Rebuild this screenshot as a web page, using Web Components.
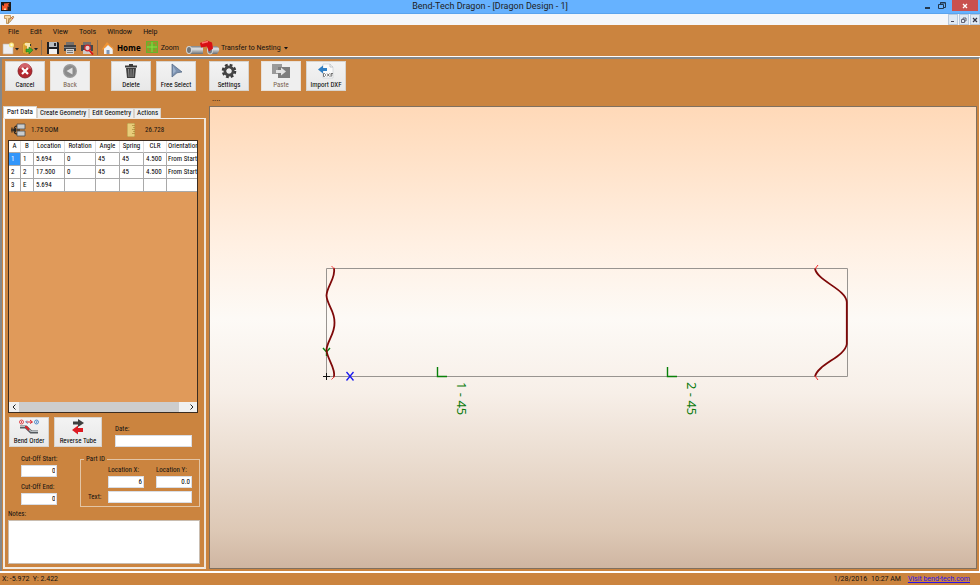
<!DOCTYPE html>
<html lang="en">
<head>
<meta charset="utf-8">
<title>Bend-Tech Dragon - [Dragon Design - 1]</title>
<style>
  html, body { height: 100%; }
  body {
    margin: 0;
    --wood: #cb843f;
    --ui: Roboto, "Open Sans", sans-serif;
    --form: "Roboto Condensed", "Liberation Sans Narrow", sans-serif;
    font: 7px/10px "Roboto Condensed", "Liberation Sans Narrow", sans-serif;
    color: #111;
  }
</style>
</head>
<body>
<bend-app></bend-app>

<script>
const define = (name, html, init) => customElements.define(name, class extends HTMLElement {
  constructor() {
    super();
    const t = document.createElement('template');
    t.innerHTML = html;
    const root = this.attachShadow({ mode: 'open' });
    root.append(t.content.cloneNode(true));
    if (init) init(this, root);
  }
});

define('title-bar', `
<style>
  :host { display: flex; align-items: flex-start; height: 13px; background: #66b2ff; border-bottom: 1px solid #5aa4ee; font: 9px/13px Roboto, "Open Sans", sans-serif; color: #222; }
  .logo { width: 12px; height: 12px; flex: none; }
  h1 { flex: 1; margin: 0; font: inherit; text-align: center; }
  .lead { width: 50px; }
  button { border: 0; padding: 0; margin: 0; background: none; width: 16px; height: 11px; display: grid; place-items: center; }
  button.close { width: 26px; background: #c9504f; margin-right: 2px; margin-left: 2px; }
</style>
<svg class="logo" viewBox="0 0 12 12"><rect x="1" y="2" width="10" height="9" fill="#1c1a1a"/><path d="M2 10V5L4 6V3.500L9.500 3L8 5L9.500 6.500L7.500 6.500V10Z" fill="#f0562a"/><path d="M4 8.500h2V10H4z" fill="#ffd0a0"/></svg>
<span class="lead"></span>
<h1><slot></slot></h1>
<button aria-label="Minimize"><svg width="8" height="8"><path d="M3 5h5v2H3z" fill="#22384e"/></svg></button>
<button aria-label="Restore"><svg width="8" height="8" fill="none" stroke="#22384e"><path d="M2.500 2.500V.5H7.500V5.500H5.500M2 1h5"/><path d="M.5 2.500h5v4h-5z"/></svg></button>
<button class="close" aria-label="Close"><svg width="6" height="6"><path d="M1 1L5 5M5 1L1 5" stroke="#fff" stroke-width="1.300"/></svg></button>
`);

define('mdi-bar', `
<style>
  :host { display: flex; justify-content: space-between; height: 11px; background: #f5f7fa; }
  svg { display: block; }
  div { display: flex; gap: 1px; }
  button { box-sizing: border-box; width: 10px; height: 11px; padding: 0; border: 1px solid #b9cade; background: #dfe9f4; display: grid; place-items: center; }
</style>
<svg width="16" height="11"><path d="M4.500 1.500h6v3h-2v5h-2v-5h-2z" fill="#f6d9a8" stroke="#b98545" stroke-width=".8"/><path d="M8 9l1-3 4-4 1 1-4 5z" fill="#eec27e" stroke="#8f6a3a" stroke-width=".6"/><path d="M11.500 3.500l1.500 1.500" stroke="#d0503a"/></svg>
<div>
<button aria-label="Minimize document"><svg width="6" height="6"><path d="M1 4h3v1H1z" fill="#445"/></svg></button>
<button aria-label="Restore document"><svg width="6" height="6" fill="none" stroke="#445" stroke-width=".8"><path d="M2 2V1h3v3H4M.5 2.500h3v3h-3z"/></svg></button>
<button aria-label="Close document"><svg width="6" height="6"><path d="M1 1L5 5M5 1L1 5" stroke="#334" stroke-width="1.200"/></svg></button>
</div>
`);

define('menu-bar', `
<style>
  :host { display: block; background: var(--wood); font: 7px/14px var(--ui); padding: 0 8px; }
  nav { display: flex; gap: 11px; }
  button { border: 0; background: none; padding: 0; font: inherit; color: inherit; }
</style>
<nav><button>File</button><button>Edit</button><button>View</button><button>Tools</button><button>Window</button><button>Help</button></nav>
`);

define('tool-strip', `
<style>
  :host { display: flex; align-items: center; height: 17px; padding-left: 2px; background: var(--wood); font: 7px/16px var(--ui); border-bottom: 1px solid #fff; }
  button { border: 0; background: none; padding: 0; margin: 0; font: inherit; color: inherit; display: flex; align-items: center; height: 16px; }
  svg { display: block; }
  i { width: 1px; height: 15px; background: #8d6f50; margin: 0 4px 0 2px; }
  .save { margin-right: 3px; }
  .home { font: bold 8px/16px "Open Sans", sans-serif; gap: 3px; margin-right: 5px; color: #000; }
  .zoom { gap: 3px; margin-right: 6px; }
  .nest { gap: 1px; }
</style>
<button aria-label="New"><svg width="18" height="14"><path d="M1 3h7l3 2v8H1z" fill="#eeeef0" stroke="#b8b2aa" stroke-width=".6"/><circle cx="9.500" cy="4" r="2.500" fill="#fbe77a"/><circle cx="9.500" cy="4" r="1.200" fill="#fffbe0"/><path d="M13 7h4l-2 2.500z" fill="#222"/></svg></button>
<button aria-label="Open"><svg width="19" height="14"><path d="M3 3l3-2 5 1v9l-4 2-4-1z" fill="#f0c24e" stroke="#b27e1c" stroke-width=".6"/><path d="M5 2h5v8H5z" fill="#f7e3ae"/><path d="M4 4l3 1v8l-3-1z" fill="#d99f2c"/><path d="M6 8h3V6l4 3-4 4v-2H6z" fill="#3cab2c" stroke="#1c6f15" stroke-width=".5"/><path d="M10 3h1v2h-1z" fill="#333"/><path d="M14 7h4l-2 2.500z" fill="#222"/></svg></button>
<i></i>
<button class="save" aria-label="Save"><svg width="14" height="14"><path d="M1 1h11l1 1v11H1z" fill="#1f1f22"/><path d="M3 1h8v5H3z" fill="#b9bdc1"/><path d="M8 2h2v3H8z" fill="#2b2b2f"/><path d="M3 8h8v5H3z" fill="#f1f1f1"/></svg></button>
<button class="save" aria-label="Print"><svg width="14" height="14"><path d="M3 1h8v4H3z" fill="#77706b"/><path d="M1 4h12v6H1z" fill="#3f4043"/><path d="M1 6h12v1H1z" fill="#808386"/><path d="M3 8h8v5H3z" fill="#d6d4d2"/><path d="M4 9.500h6M4 11.500h6" stroke="#77797b"/></svg></button>
<button aria-label="Print preview"><svg width="15" height="14"><path d="M3 1h8v4H3z" fill="#77706b"/><path d="M1 4h12v6H1z" fill="#45464a"/><path d="M3 9h8v4H3z" fill="#d0cdca"/><circle cx="7.500" cy="7" r="2.800" fill="#e6cfd0" stroke="#d02427" stroke-width="1.300"/><path d="M9.500 9.500l3.500 4" stroke="#d9151b" stroke-width="1.800"/></svg></button>
<i></i>
<button class="home"><svg width="12" height="14"><path d="M2 7v6h8.500V6.500z" fill="#e9edf2"/><path d="M0 8L5 1l7 7-1 1-5-5-5 5z" fill="#f19535"/><path d="M2 8l4-4 4.500 4v5H2z" fill="#f0f2f5"/><path d="M4.500 9h3v4h-3z" fill="#7e96b6"/></svg>Home</button>
<button class="zoom"><svg width="12" height="13" fill="none"><path d="M0 0h12v12H0z" fill="#68b32b"/><path d="M2 5V2h3M7 2h3v3M2 7v3h3M7 10h3V7" stroke="#b1862f" stroke-width="1.300"/><path d="M6 1v10M1 6h10" stroke="#8ede45"/></svg>Zoom</button>
<button class="nest"><svg width="35" height="16"><defs><linearGradient id="s" x2="0" y2="1"><stop stop-color="#777c80"/><stop offset=".35" stop-color="#e2e5e7"/><stop offset="1" stop-color="#6b6f73"/></linearGradient></defs><path d="M4 6h14v8H4z" fill="url(#s)"/><ellipse cx="4" cy="10" rx="3" ry="4" fill="#d4d7d9"/><ellipse cx="4" cy="10" rx="2" ry="3" fill="#71767a"/><path d="M24 7l7-1q4 1 3 5l-2 3h-6z" fill="url(#s)"/><ellipse cx="25" cy="10.500" rx="3" ry="4" fill="#cfd2d4"/><ellipse cx="25" cy="10.500" rx="2" ry="3" fill="#74797d"/><path d="M15 3l7-2.500 5 2 1 6-4 3-2-5-6 1z" fill="#d80f14"/><path d="M17 3l6-1.500" stroke="#ff7a70" stroke-width="1.300"/></svg>Transfer to Nesting <svg width="8" height="6"><path d="M2 2h4L4 4.500z" fill="#111"/></svg></button>
`);

const icons = {
  cancel: '<circle cx="8" cy="8" r="7" fill="#b4272e" stroke="#7c1b20" stroke-width=".8"/><path d="M2 6a6 6 0 0 1 12 0q-6-3-12 0z" fill="#d0636a"/><path d="M5 5l6 6M11 5l-6 6" stroke="#fff" stroke-width="2.200"/>',
  back: '<circle cx="8" cy="8" r="7" fill="#9b9b9b"/><circle cx="8" cy="8" r="5.600" fill="#8b8b8b"/><path d="M10.500 4.500v7L4.500 8z" fill="#e2e2e2"/>',
  trash: '<path d="M2 2.500h12v2H2zM6 1h4v2H6z" fill="#3b3b3b"/><path d="M3 5h10l-1 10H4z" fill="#3f3f3f"/><path d="M5.500 6l.5 8M8 6v8M10.500 6l-.5 8" stroke="#999" stroke-width=".9"/>',
  pointer: '<path d="M4 1l10 8-5 .8L4 14z" fill="#7c92b0" stroke="#4e637f" stroke-width=".7"/><path d="M5 3v8l3-3z" fill="#9db1cb"/>',
  gear: '<circle cx="8" cy="8" r="6" fill="none" stroke="#3b3b3b" stroke-width="2.600" stroke-dasharray="2.700 2.010"/><circle cx="8" cy="8" r="4" fill="none" stroke="#454545" stroke-width="3"/><circle cx="8" cy="8" r="2.500" fill="#eee"/>',
  paste: '<path d="M0 1h10v10H0z" fill="#9a9a9a"/><path d="M6 4h12v11H6z" fill="#7d7d7d"/><path d="M4 7h5V4.500L14 8.500 9 12.500V10H4z" fill="#e3e3e3"/>',
  dxf: '<path d="M5 1h7l3 3v11H5z" fill="#fafafa" stroke="#ccd0d4" stroke-width=".7"/><path d="M12 1v3h3" fill="none" stroke="#a9afb5" stroke-width=".7"/><path d="M9 5H5V2.500L0 6.500l5 4V8h4z" fill="#2f7fc4"/><path d="M5.500 10.500v3h1l1-1v-1l-1-1zM9 10.500l2.500 3M11.500 10.500L9 13.500M13 14v-3.500h2M13 12h1.500" fill="none" stroke="#555" stroke-width=".8"/>',
  order: '<g fill="none"><circle cx="2.500" cy="3" r="2" stroke="#d8232a" stroke-width=".8"/><path d="M2.500 2v2" stroke="#d8232a" stroke-width=".8"/><path d="M7 3h6M11 1l2.500 2L11 4.500" stroke="#d8232a"/><path d="M8 1.500L6.500 3 9 4.500" stroke="#5a7fbd" stroke-width=".8"/><circle cx="17.500" cy="3" r="2" stroke="#3277c2" stroke-width=".8"/><path d="M17 2.200h1v.8l-1 .8h1" stroke="#3277c2" stroke-width=".6"/><path d="M1 8h6l5 5h7" stroke="#555b60" stroke-width="3.200"/><path d="M1 7.500h6l5 5h7" stroke="#b9bfc4" stroke-width="1.200"/><path d="M6 8h1.500L10 11" stroke="#d6262b" stroke-width="2"/></g>',
  reverse: '<path d="M3 2.500h5V0l6 4-6 4V5.500H3z" fill="#3e3e3e"/><path d="M13 9H8V6.500L2 11l6 4.500V13h5z" fill="#dd1a22"/>'
};

define('icon-button', `
<style>
  :host { display: block; width: 40px; }
  :host([wide]) { width: 48px; }
  button { width: 100%; height: 30px; padding: 1px 0 0; border: 1px solid #d8d4ce; background: linear-gradient(#f3f3f3, #e8e8e8); display: flex; flex-direction: column; align-items: center; justify-content: space-between; font: inherit; color: #000; box-sizing: border-box; white-space: nowrap; }
  :host([off]) button { background: #efefef; color: #7a6450; border-color: #e8e0d8; }
  svg { display: block; }
</style>
<button><svg height="16"></svg><span><slot></slot></span></button>
`, (host, root) => {
  const svg = root.querySelector('svg'), name = host.getAttribute('icon');
  svg.innerHTML = icons[name];
  svg.setAttribute('width', { order: 20, paste: 18 }[name] || 16);
  if (host.hasAttribute('off')) root.querySelector('button').disabled = true;
});

define('action-bar', `
<style>
  :host { display: flex; gap: 5px; padding: 2px 0 0 3px; height: 30px; }
  .g { margin-left: 16px; }
  .h { margin-left: 8px; }
  .j { margin-left: 7px; }
</style>
<icon-button icon="cancel">Cancel</icon-button>
<icon-button icon="back" off>Back</icon-button>
<icon-button icon="trash" class="g">Delete</icon-button>
<icon-button icon="pointer">Free Select</icon-button>
<icon-button icon="gear" class="h">Settings</icon-button>
<icon-button icon="paste" class="j" off>Paste</icon-button>
<icon-button icon="dxf">Import DXF</icon-button>
`);

define('tab-row', `
<style>
  :host { display: flex; align-items: flex-end; height: 12px; }
  button { height: 10px; padding: 0 2px; border: 1px solid #d9d2ca; border-bottom: 0; background: #efefef; font: 7px/9px var(--form); color: #000; white-space: nowrap; }
  button[aria-selected=true] { background: #fff; height: 12px; line-height: 11px; padding: 0 3px; }
</style>
<button role="tab" aria-selected="true">Part Data</button><button role="tab">Create Geometry</button><button role="tab">Edit Geometry</button><button role="tab">Actions</button>
`);

define('bend-table', `
<style>
  :host { display: flex; flex-direction: column; border: 1px solid #3b2c20; background: #e09a5a; overflow: hidden; flex: 1; }
  .view { flex: 1; overflow: hidden; min-height: 0; }
  table { border-collapse: separate; border-spacing: 0; table-layout: fixed; width: 203px; }
  th, td { box-sizing: border-box; height: 13px; padding: 0 2px; line-height: 12px; font-weight: 400; text-align: left; background: #fff; border-right: 1px solid #a9a9a9; border-bottom: 1px solid #a9a9a9; white-space: nowrap; color: #000; }
  th { height: 12px; line-height: 11px; text-align: center; padding: 0; border-right-color: #dedede; }
  tr > :last-child { text-align: left; padding: 0 0 0 1px; }
  td.sel { background: #3296fa; color: #fff; }
  .bar { display: flex; height: 10px; background: #f0f0f0; }
  .bar button { width: 10px; padding: 0; border: 0; background: none; display: grid; place-items: center; }
  .track { flex: 1; padding-right: 8px; }
  .thumb { height: 100%; background: #cdcdcd; }
</style>
<div class="view"><table>
<colgroup><col style="width:12px"><col style="width:13px"><col style="width:31px"><col style="width:31px"><col style="width:24px"><col style="width:24px"><col style="width:23px"><col style="width:45px"></colgroup>
<thead><tr><th>A<th>B<th>Location<th>Rotation<th>Angle<th>Spring<th>CLR<th>Orientation</tr></thead>
<tbody>
<tr><td class="sel">1<td>1<td>5.694<td>0<td>45<td>45<td>4.500<td>From Start</tr>
<tr><td>2<td>2<td>17.500<td>0<td>45<td>45<td>4.500<td>From Start</tr>
<tr><td>3<td>E<td>5.694<td><td><td><td><td></tr>
</tbody></table></div>
<div class="bar"><button aria-label="Scroll left"><svg width="6" height="6"><path d="M4.500 .5L2 3l2.500 2.500" fill="none" stroke="#222"/></svg></button><div class="track"><div class="thumb"></div></div><button aria-label="Scroll right"><svg width="6" height="6"><path d="M1.500 .5L4 3 1.500 5.500" fill="none" stroke="#222"/></svg></button></div>
`);

define('part-form', `
<style>
  :host { display: block; padding: 4px 0 3px 1px; }
  input, textarea { box-sizing: border-box; display: block; border: 1px solid #d9dde4; background: #fff; padding: 0 1px; margin: 0; font: inherit; color: #000; outline: 0; width: 100%; height: 12px; border-radius: 0; }
  .num { text-align: right; }
  label { display: block; line-height: 11px; white-space: nowrap; }
  .row { display: flex; gap: 5px; }
  .date { flex: 1; padding: 7px 8px 0 8px; }
  .mid { display: grid; grid-template-columns: 36px 1fr; column-gap: 23px; padding-left: 12px; margin-top: 7px; }
  .cut { display: grid; gap: 5px; align-content: start; }
  fieldset { border: 1px solid #e3c5a5; margin: 0; padding: 0 7px 3px; min-width: 0; display: grid; grid-template-columns: 20px 1fr 36px; }
  legend { padding: 0 2px; margin-left: -4px; line-height: 11px; }
  .t { grid-column: 1; line-height: 12px; margin-top: 3px; }
  .tx { grid-column: 2 / 4; margin-top: 3px; }
  .x { grid-column: 2; width: 36px; }
  .notes { margin: 2px 0 0 -1px; }
  textarea { height: 44px; resize: none; border-color: #c9bdb0; }
</style>
<div class="row"><icon-button icon="order">Bend Order</icon-button><icon-button icon="reverse" wide>Reverse Tube</icon-button>
<div class="date"><label for="d">Date:</label><input id="d"></div></div>
<div class="mid"><div class="cut"><div><label for="s">Cut-Off Start:</label><input id="s" class="num" value="0"></div><div><label for="e">Cut-Off End:</label><input id="e" class="num" value="0"></div></div>
<fieldset><legend>Part ID</legend><div class="x"><label for="x">Location X:</label><input id="x" class="num" value="6"></div><div><label for="y">Location Y:</label><input id="y" class="num" value="0.0"></div><label class="t" for="t">Text:</label><div class="tx"><input id="t"></div></fieldset></div>
<div class="notes"><label for="n">Notes:</label><textarea id="n"></textarea></div>
`);

define('part-panel', `
<style>
  :host { display: flex; flex-direction: column; min-height: 0; }
  .page { flex: 1; display: flex; flex-direction: column; border: 2px solid #f3ebe2; border-top-width: 1px; border-right-color: #efe4d8; padding: 0 4px 0 3px; min-height: 0; }
  .info { display: flex; align-items: center; height: 21px; padding-left: 3px; gap: 5px; }
  .info span:first-of-type { width: 91px; }
  .info span:last-of-type { padding-left: 5px; }
  bend-table { margin-right: 2px; }
</style>
<tab-row></tab-row>
<div class="page">
<div class="info"><svg width="15" height="14"><path d="M6 1h8v5H6zM6 8h8v5H6z" fill="#c9cccf" stroke="#4b4b4b" stroke-width=".8"/><path d="M6 3q-3 0-3 4t3 4M0 7h9M1 4.500v5" fill="none" stroke="#222" stroke-width="1.100"/><path d="M2 7l3-2.500v5z" fill="#222"/></svg><span>1.75 DOM</span>
<svg width="8" height="14"><path d="M0 0h8v14H0z" fill="#e8cd7a" stroke="#a5822f" stroke-width=".8"/><path d="M5 2.500h3M6 4.500h2M5 6.500h3M6 8.500h2M5 10.500h3" stroke="#a07c2b" stroke-width=".6"/></svg><span>26.728</span></div>
<bend-table></bend-table>
<part-form></part-form>
</div>
`);

define('design-view', `
<style>
  :host { display: block; border: 1px solid #80705f; box-sizing: border-box; overflow: hidden; min-height: 0; background: linear-gradient(#ffd9b8, #fff0e3 30%, #fdfaf6 46%, #f7efe8 62%, #ddc8b5 92%, #cfb6a2); }
  svg { display: block; width: 100%; height: 100%; }
  text { font: 13px "Noto Sans", sans-serif; fill: #0a7a0a; }
</style>
<svg viewBox="210 107 766 461" preserveAspectRatio="xMidYMid meet" role="img" aria-label="Tube wrap layout" fill="none">
<path d="M326.500 268.500H847.500V376.500H326.500Z" stroke="#989490"/>
<path d="M323 376.500h7M326.500 373v7" stroke="#111"/>
<path d="M323 348l3.500 4 3.500-4M326.500 352v4" stroke="#0a8010" stroke-width="1.400"/>
<path d="M346.500 372l7 8.500M353.500 372l-7 8.500" stroke="#1a1af0" stroke-width="1.300"/>
<path d="M334 268C336 278 327 286 326.500 295.500C327 305 335 311 334.500 322.500C335 334 327 341 326.500 350C327 359 336 368 334 377" stroke="#7e0808" stroke-width="1.800"/>
<path d="M331.500 266l3 3M331.500 379.500l3-3" stroke="#f04040"/>
<path d="M815 268.500C817 281 846 289 846.800 302V344C845 357 818 364 815 376.500" stroke="#7e0808" stroke-width="1.800"/>
<path d="M818 265l-3 4M818 380l-3-4" stroke="#f02525"/>
<path d="M437.500 367v9.500h9.500M667.500 367v9.500h9.500" stroke="#088008" stroke-width="1.400"/>
<text transform="translate(457 382) rotate(90)">1 - 45</text>
<text transform="translate(687 382) rotate(90)">2 - 45</text>
</svg>
`);

define('status-bar', `
<style>
  :host { display: flex; gap: 7px; height: 12px; padding: 0 10px 0 2px; border-top: 2px solid #fff; background: var(--wood); font: 7px/13px var(--ui); white-space: pre; }
  .pos { flex: 1; }
  .date { margin-right: -3px; }
  a { color: #2a12e8; }
</style>
<span class="pos">X: -5.972  Y: 2.422</span><span class="date">1/28/2016</span><span>10:27 AM</span><a href="#">Visit bend-tech.com</a>
`);

define('bend-app', `
<style>
  :host { display: flex; flex-direction: column; height: 100vh; min-height: 480px; background: var(--wood); }
  main { flex: 1; min-height: 0; display: flex; flex-direction: column; border: 1px solid #85888a; border-width: 2px 0 0 2px; border-right: 1px solid #fff; }
  .hint { margin: 0 0 0 210px; font: 8px/15px var(--ui); color: #000; }
  .work { flex: 1; min-height: 0; display: grid; grid-template-columns: 203px minmax(0, 1fr); column-gap: 3px; padding: 0 2px 2px 1px; }
  title-bar, mdi-bar, menu-bar, tool-strip, status-bar { flex: none; }
</style>
<title-bar>Bend-Tech Dragon - [Dragon Design - 1]</title-bar>
<mdi-bar></mdi-bar>
<menu-bar></menu-bar>
<tool-strip></tool-strip>
<main>
<action-bar></action-bar>
<p class="hint">....</p>
<div class="work"><part-panel></part-panel><design-view></design-view></div>
</main>
<status-bar></status-bar>
`);
</script>
</body>
</html>
